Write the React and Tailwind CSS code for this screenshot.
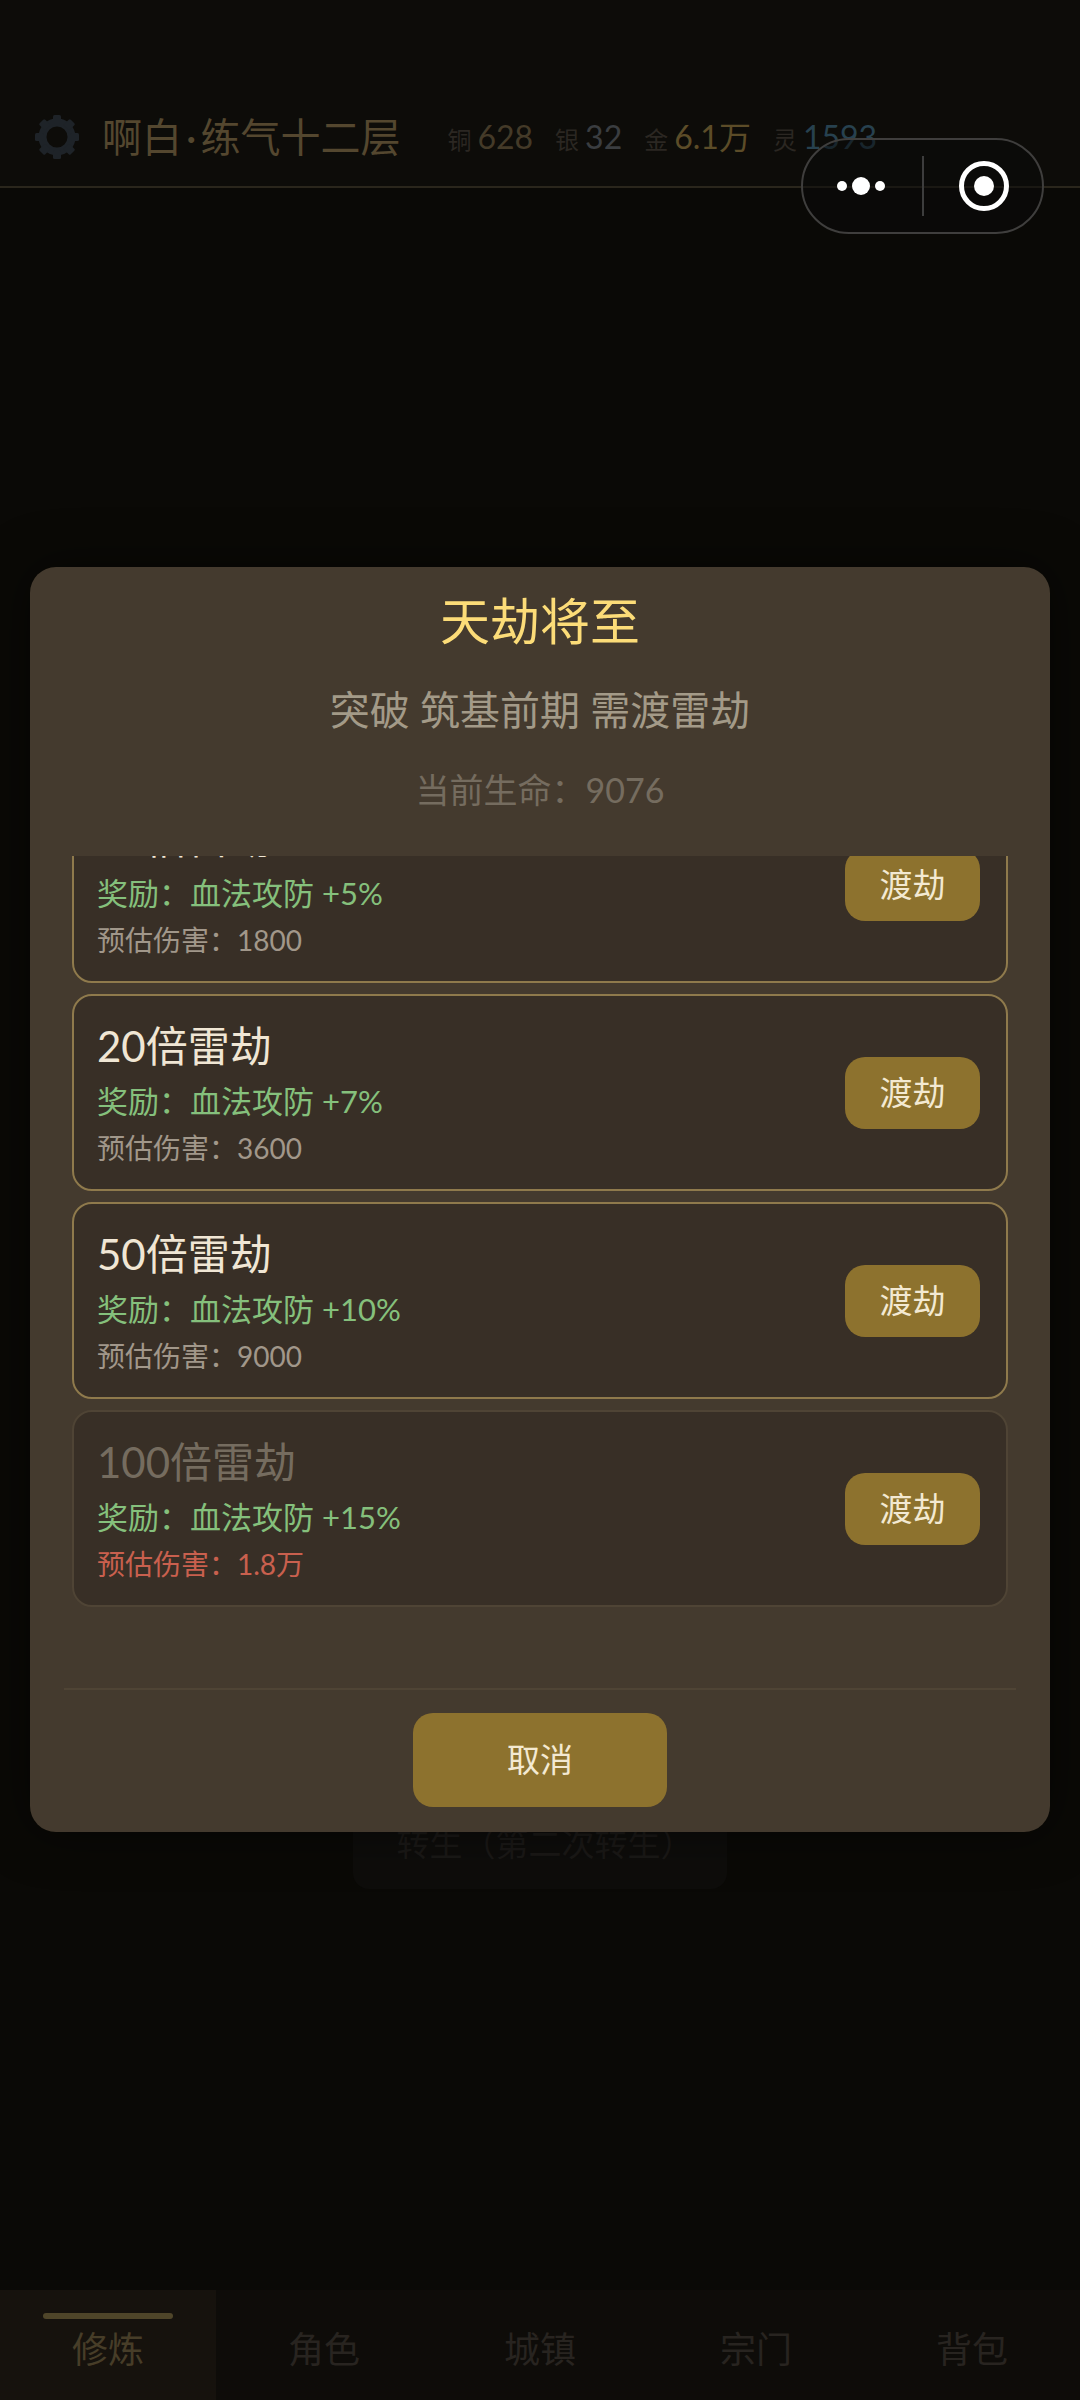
const tribulations = [
  { id: 1, title: "10倍雷劫", reward: "+5%", damage: "1800" },
  { id: 2, title: "20倍雷劫", reward: "+7%", damage: "3600" },
  { id: 3, title: "50倍雷劫", reward: "+10%", damage: "9000" },
  { id: 4, title: "100倍雷劫", reward: "+15%", damage: "1.8万", danger: true },
];

const stats = [
  { label: "铜", value: "628", color: "text-[#443a28]" },
  { label: "银", value: "32", color: "text-[#3a3d40]" },
  { label: "金", value: "6.1万", color: "text-[#5c4c28]" },
  { label: "灵", value: "1593", color: "text-[#27414f]" },
];

const tabs = ["修炼", "角色", "城镇", "宗门", "背包"];

const Gear = () => (
  <svg width="46" height="46" viewBox="0 0 46 46" className="shrink-0">
    <circle cx="23" cy="23" r="14.5" fill="none" stroke="#1e2328" strokeWidth="8" />
    {[0, 45, 90, 135, 180, 225, 270, 315].map((deg) => (
      <rect key={deg} x="19" y="1" width="8" height="9" rx="1.5" fill="#1e2328" transform={`rotate(${deg} 23 23)`} />
    ))}
  </svg>
);

const Capsule = () => (
  <div className="absolute left-[801px] top-[138px] flex h-[96px] w-[243px] items-center rounded-full border-2 border-[#3f3e3d] bg-[#0a0a0a]/50">
    <div className="flex w-[119px] items-center justify-center gap-[5px] pr-[4px]">
      <span className="h-[10px] w-[10px] rounded-full bg-white" />
      <span className="h-[18px] w-[18px] rounded-full bg-white" />
      <span className="h-[10px] w-[10px] rounded-full bg-white" />
    </div>
    <div className="h-[60px] w-[2px] bg-[#3d3d3d]" />
    <div className="flex flex-1 items-center justify-center pl-[2px]">
      <div className="flex h-[50px] w-[50px] items-center justify-center rounded-full border-[5px] border-white">
        <span className="h-[20px] w-[20px] rounded-full bg-white" />
      </div>
    </div>
  </div>
);

const TribulationCard = ({ item }) => (
  <div
    className={`flex h-[197px] items-center justify-between rounded-[20px] border-2 bg-[#382f26] pl-[23px] pr-[26px] ${
      item.danger ? "border-[#4f4435]" : "border-[#8f7a4c]"
    }`}
  >
    <div className="flex flex-col pt-[3px]">
      <div className={`text-[42px] leading-[50px] ${item.danger ? "text-[#756c5f]" : "text-[#f0e6d4]"}`}>
        {item.title}
      </div>
      <div className="mt-[8px] text-[31px] leading-[44px] text-[#85c07c]">奖励：血法攻防 {item.reward}</div>
      <div className={`mt-[5px] text-[28px] leading-[40px] ${item.danger ? "text-[#c9604e]" : "text-[#a1978a]"}`}>
        预估伤害：{item.damage}
      </div>
    </div>
    <button className="h-[72px] w-[135px] rounded-[20px] bg-[#8d722e] text-[33px] text-[#f3e9d2]">渡劫</button>
  </div>
);

const Modal = () => (
  <div className="absolute inset-x-[30px] top-[567px] flex h-[1265px] flex-col rounded-[26px] bg-[#443a2e] shadow-[0_0_50px_rgba(0,0,0,0.5)]">
    <div className="flex h-[289px] shrink-0 flex-col items-center">
      <h2 className="mt-[24px] text-[50px] leading-[60px] text-[#fcdc78]">天劫将至</h2>
      <p className="mt-[34px] text-[40px] leading-[50px] text-[#a39a88]">突破 筑基前期 需渡雷劫</p>
      <p className="mt-[33px] text-[34px] leading-[44px] text-[#756c5f]">当前生命：9076</p>
    </div>
    <div className="h-[832px] shrink-0 overflow-hidden px-[42px]">
      <div className="-mt-[70px] flex flex-col gap-[11px]">
        {tribulations.map((item) => (
          <TribulationCard key={item.id} item={item} />
        ))}
      </div>
    </div>
    <div className="mx-[34px] h-[2px] shrink-0 bg-[#4f4435]" />
    <div className="flex justify-center pt-[23px]">
      <button className="h-[94px] w-[254px] rounded-[20px] bg-[#8d722e] text-[33px] text-[#f3e9d2]">取消</button>
    </div>
  </div>
);

const App = () => (
  <div className="relative flex h-[2400px] w-[1080px] flex-col overflow-hidden bg-[#0a0907] font-['Lato','Noto_Sans_CJK_SC',sans-serif]">
    <header className="flex h-[188px] shrink-0 items-center border-b-2 border-[#2a261c] bg-[#0d0c09] pl-[34px] pt-[88px]">
      <Gear />
      <span className="ml-[22px] text-[40px] leading-[48px] text-[#54472f]">
        啊白<span className="mx-[4px]">·</span>练气十二层
      </span>
      <div className="ml-[47px] flex items-baseline gap-[22px]">
        {stats.map((s) => (
          <span key={s.label} className="flex items-baseline gap-[6px]">
            <span className="text-[24px] text-[#2b2722]">{s.label}</span>
            <span className={`text-[32px] ${s.color}`}>{s.value}</span>
          </span>
        ))}
      </div>
    </header>

    <main className="flex flex-1 flex-col items-center justify-end bg-[#0a0906] pb-[401px]">
      <button className="h-[100px] w-[374px] rounded-[16px] bg-[#0e0d0b] pl-[10px] pt-[10px] text-[33px] text-[#1b1917]">
        转生（第二次转生）
      </button>
    </main>

    <nav className="grid h-[110px] shrink-0 grid-cols-5 bg-[#0e0c09]">
      {tabs.map((tab, i) => (
        <div
          key={tab}
          className={`relative flex items-center justify-center pt-[8px] text-[36px] ${
            i === 0 ? "bg-[#16120d] text-[#473d28]" : "text-[#282420]"
          }`}
        >
          {i === 0 && <span className="absolute left-[43px] top-[23px] h-[6px] w-[130px] rounded-full bg-[#4f4529]" />}
          {tab}
        </div>
      ))}
    </nav>

    <Modal />
    <Capsule />
  </div>
);

export default App;
